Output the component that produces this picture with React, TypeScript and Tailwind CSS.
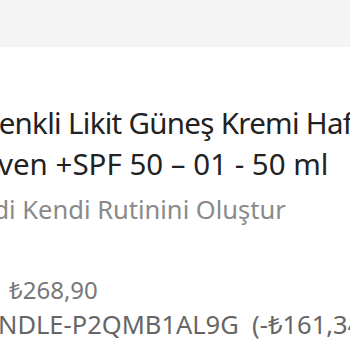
export default function App() {
  return (
    <div
      className="w-[350px] h-[350px] overflow-hidden bg-white"
      style={{ fontFamily: '"Noto Sans", "Open Sans", sans-serif' }}
    >
      {/* top bar */}
      <div className="h-[47px] bg-[#f4f4f4]" />

      <div className="pt-[55px]">
        <h1 className="text-[29.5px] leading-[41px] text-[#222] font-normal whitespace-nowrap">
          <div className="-ml-[19px] tracking-[-0.7px]">Renkli Likit Güneş Kremi Hafif</div>
          <div className="-ml-[2px]">ven +SPF 50 – 01 - 50 ml</div>
        </h1>
        <p className="mt-[10px] text-[25.5px] leading-[30px] text-[#8a8a8a] whitespace-nowrap -ml-[51px]">
          Şimdi Kendi Rutinini Oluştur
        </p>

        <div className="mt-[49px] leading-[34px] text-[#777] whitespace-nowrap">
          <div className="pl-[9px] text-[24px]">₺268,90</div>
          <div className="-ml-[2px] text-[25.5px] text-[#666]">NDLE-P2QMB1AL9G&nbsp; (-₺161,34)</div>
        </div>
      </div>
    </div>
  );
}
